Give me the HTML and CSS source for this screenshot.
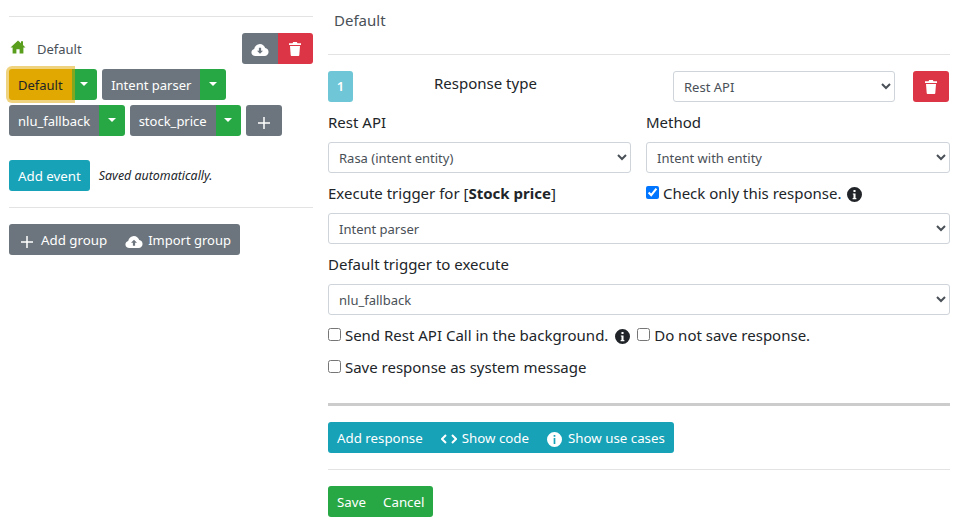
FILE: index.html
```html
<!DOCTYPE html>
<html lang="en">
<head>
    <meta charset="UTF-8">
    <title>Default</title>
    <link rel="stylesheet" href="styles.css">
</head>
<body>

<div class="page">
    <div class="sidebar">
        <hr class="rule first-rule">
        <div class="group-head">
            <span class="group-title">
                <svg class="home-icon" viewBox="0 0 16 14"><path d="M8 0.5 0.5 7.500H2.600V13.500H6.400V9.200H9.600V13.500H13.400V7.500H15.500L13 5.100V1.300H11V3.300Z"/></svg>
                Default
            </span>
            <div class="btn-group">
                <button class="btn btn-grey icon-btn">
                    <svg class="icon-cloud" viewBox="0 0 20 14"><path fill-rule="evenodd" d="M4.600 14C2 14 0 12.200 0 9.800 0 7.800 1.300 6.300 3.200 5.800 3.900 2.500 6.500 0 9.800 0c3 0 5.500 2 6.300 4.800 2.300.4 3.900 2.300 3.900 4.600C20 12 18 14 15.400 14ZM8.700 4.500V8H6.500L10 11.500 13.500 8H11.300V4.500Z"/></svg>
                </button>
                <button class="btn btn-red icon-btn">
                    <svg class="icon-trash" viewBox="0 0 12 14"><path d="M4.200 0H7.800L8.500 1.200H12V3H0V1.200H3.500ZM1 4H11L10.300 13C10.250 13.600 9.800 14 9.200 14H2.800C2.200 14 1.750 13.600 1.700 13Z"/></svg>
                </button>
            </div>
        </div>

        <div class="event-list">
            <div class="btn-group">
                <button class="btn btn-yellow">Default</button>
                <button class="btn btn-green caret-btn"><span class="caret"></span></button>
            </div>
            <div class="btn-group">
                <button class="btn btn-grey">Intent parser</button>
                <button class="btn btn-green caret-btn"><span class="caret"></span></button>
            </div>
            <div class="btn-group">
                <button class="btn btn-grey">nlu_fallback</button>
                <button class="btn btn-green caret-btn"><span class="caret"></span></button>
            </div>
            <div class="btn-group">
                <button class="btn btn-grey">stock_price</button>
                <button class="btn btn-green caret-btn"><span class="caret"></span></button>
            </div>
            <button class="btn btn-grey plus-btn">
                <svg class="icon-plus" viewBox="0 0 12 12"><path d="M5.250 0h1.500v5.250H12v1.500H6.750V12h-1.500V6.750H0v-1.500h5.250Z"/></svg>
            </button>
        </div>

        <div class="add-event">
            <button class="btn btn-teal">Add event</button>
            <em class="saved-note">Saved automatically.</em>
        </div>
        <hr class="rule side-rule">
        <div class="btn-group">
            <button class="btn btn-grey add-group-btn">
                <svg class="icon-plus" viewBox="0 0 12 12"><path d="M5.250 0h1.500v5.250H12v1.500H6.750V12h-1.500V6.750H0v-1.500h5.250Z"/></svg>
                Add group
            </button>
            <button class="btn btn-grey import-btn">
                <svg class="icon-cloud" viewBox="0 0 20 14"><path fill-rule="evenodd" d="M4.600 14C2 14 0 12.200 0 9.800 0 7.800 1.300 6.300 3.200 5.800 3.900 2.500 6.500 0 9.800 0c3 0 5.500 2 6.300 4.800 2.300.4 3.900 2.300 3.900 4.600C20 12 18 14 15.400 14ZM8.700 11.500V8H6.500L10 4.500 13.500 8H11.300V11.500Z"/></svg>
                Import group
            </button>
        </div>
    </div>

    <div class="main">
        <div class="main-title">Default</div>
        <hr class="rule title-rule">

        <div class="type-row">
            <span class="badge">1</span>
            <span class="type-label">Response type</span>
            <select class="field type-select"><option>Rest API</option></select>
            <button class="btn btn-red del-btn">
                <svg class="icon-trash" viewBox="0 0 12 14"><path d="M4.200 0H7.800L8.500 1.200H12V3H0V1.200H3.500ZM1 4H11L10.300 13C10.250 13.600 9.800 14 9.200 14H2.800C2.200 14 1.750 13.600 1.700 13Z"/></svg>
            </button>
        </div>

        <div class="two-cols">
            <div>
                <label class="field-label">Rest API</label>
                <select class="field"><option>Rasa (intent entity)</option></select>
            </div>
            <div>
                <label class="field-label">Method</label>
                <select class="field"><option>Intent with entity</option></select>
            </div>
        </div>

        <div class="two-cols trigger-row">
            <div class="trigger-label">Execute trigger for [<b>Stock price</b>]</div>
            <label class="check"><input type="checkbox" checked> Check only this response.
                <svg class="icon-info" viewBox="0 0 16 16"><path fill-rule="evenodd" d="M8 0a8 8 0 1 0 0 16A8 8 0 0 0 8 0ZM6.900 3.200h2.200v2.200H6.900ZM6.200 6.800h2.900v5h.9v1.200H6v-1.200h.9V8H6.200Z"/></svg>
            </label>
        </div>
        <select class="field"><option>Intent parser</option></select>

        <label class="field-label default-label">Default trigger to execute</label>
        <select class="field"><option>nlu_fallback</option></select>

        <div class="check-row first-check">
            <label class="check"><input type="checkbox"> Send Rest API Call in the background.
                <svg class="icon-info" viewBox="0 0 16 16"><path fill-rule="evenodd" d="M8 0a8 8 0 1 0 0 16A8 8 0 0 0 8 0ZM6.900 3.200h2.200v2.200H6.900ZM6.200 6.800h2.900v5h.9v1.200H6v-1.200h.9V8H6.200Z"/></svg>
            </label>
            <label class="check"><input type="checkbox"> Do not save response.</label>
        </div>
        <div class="check-row second-check">
            <label class="check"><input type="checkbox"> Save response as system message</label>
        </div>

        <hr class="thick-rule">

        <div class="btn-group">
            <button class="btn btn-teal">Add response</button>
            <button class="btn btn-teal">
                <svg class="icon-code" viewBox="0 0 16 10"><path d="M5 1 1 5 5 9M11 1 15 5 11 9"/></svg>
                Show code
            </button>
            <button class="btn btn-teal">
                <svg class="icon-info" viewBox="0 0 16 16"><path fill-rule="evenodd" d="M8 0a8 8 0 1 0 0 16A8 8 0 0 0 8 0ZM7.100 3.200h1.800v1.900H7.100ZM7.100 6.500h1.800v6.300H7.100Z"/></svg>
                Show use cases
            </button>
        </div>
        <hr class="rule bottom-rule">
        <div class="btn-group">
            <button class="btn btn-green save-btn">Save</button>
            <button class="btn btn-green">Cancel</button>
        </div>
    </div>
</div>

</body>
</html>
```

FILE: styles.css
```css
* {
    box-sizing: border-box;
}

body {
    margin: 0;
    font-family: "Noto Sans", "Open Sans", sans-serif;
    font-size: 14px;
    line-height: 21px;
    color: #212529;
    background: #fff;
}

.page {
    display: flex;
    align-items: flex-start;
    padding-left: 9px;
}

.sidebar {
    width: 304px;
    flex: none;
}

.main {
    width: 622px;
    flex: none;
    margin-left: 15px;
}

.rule {
    border: none;
    border-top: 1px solid #e3e3e3;
    margin: 0;
}

.first-rule {
    margin-top: 16px;
}

.side-rule {
    margin: 16px 0;
}

.title-rule {
    margin: 23px 0 16px;
}

.bottom-rule {
    margin: 16px 0;
}

.thick-rule {
    border: none;
    border-top: 3px solid #ccc;
    margin: 25px 0 16px;
}

/* buttons */
.btn {
    display: inline-flex;
    align-items: center;
    height: 31px;
    padding: 1px 8px 0;
    border: 1px solid transparent;
    border-radius: 3px;
    font: inherit;
    font-size: 13.3px;
    color: #fff;
    white-space: nowrap;
}

.btn-group {
    display: inline-flex;
}

.btn-group .btn {
    border-radius: 0;
}

.btn-group .btn:first-child {
    border-radius: 3px 0 0 3px;
}

.btn-group .btn:last-child {
    border-radius: 0 3px 3px 0;
}

.btn-grey { background: #6c757d; }
.btn-green { background: #28a745; }
.btn-red { background: #dc3545; }
.btn-teal { background: #17a2b8; }

.btn-yellow {
    background: #e0a800;
    color: #212529;
    box-shadow: 0 0 0 3px rgba(224, 168, 0, 0.5);
    position: relative;
}

.caret-btn {
    width: 25.5px;
    justify-content: center;
    padding: 0 0 2px;
}

.caret {
    border-top: 4px solid #fff;
    border-left: 4px solid transparent;
    border-right: 4px solid transparent;
}

/* icons */
.home-icon {
    width: 16px;
    height: 14px;
    fill: #5a9e1e;
    margin-bottom: 4px;
}

.icon-cloud {
    width: 18px;
    height: 12px;
    fill: #fff;
    flex: none;
    margin-top: 3px;
}

.icon-trash {
    width: 12px;
    height: 14px;
    fill: #fff;
    flex: none;
}

.icon-plus {
    width: 12px;
    height: 12px;
    fill: #fff;
    flex: none;
    margin-top: 3px;
}

.icon-info {
    width: 15px;
    height: 15px;
    fill: #212529;
    vertical-align: -3px;
    margin-left: 2px;
}

.btn .icon-info {
    fill: #fff;
    margin: 2px 6px 0 0;
}

.icon-code {
    width: 16px;
    height: 10px;
    fill: none;
    stroke: #fff;
    stroke-width: 2;
    margin: 2px 5px 0 0;
}

/* sidebar */
.group-head {
    display: flex;
    justify-content: space-between;
    align-items: center;
    margin-top: 16px;
}

.group-title {
    display: flex;
    align-items: center;
    padding-top: 1px;
    margin-left: 1px;
    font-size: 13px;
    color: #495057;
}

.group-title .home-icon {
    margin-right: 11px;
}

.icon-btn {
    width: 35.5px;
    justify-content: center;
    padding: 0;
}

.event-list {
    display: flex;
    flex-wrap: wrap;
    gap: 5px;
    margin-top: 5px;
}

.event-list .btn {
    font-size: 13px;
}

.plus-btn {
    width: 36px;
    justify-content: center;
}

.add-event {
    display: flex;
    align-items: center;
    gap: 9px;
    margin-top: 24px;
}

.saved-note {
    font-size: 12.4px;
}

.add-group-btn {
    padding-left: 11px;
    gap: 8px;
}

.import-btn {
    font-size: 13px;
    gap: 5px;
}

.save-btn {
    padding-right: 7px;
}

/* main */
.main-title {
    margin: 10px 0 0 6px;
    font-size: 15px;
    color: #495057;
}

.type-row {
    display: flex;
    align-items: flex-start;
}

.badge {
    width: 25px;
    height: 31px;
    border-radius: 3px;
    background: #6ec6d6;
    color: #fff;
    font-weight: 600;
    font-size: 13px;
    display: flex;
    align-items: center;
    justify-content: center;
}

.type-label {
    font-size: 15px;
    margin-left: 81px;
    margin-top: 2px;
    width: 239px;
}

.del-btn {
    width: 36px;
    justify-content: center;
    margin-left: 18px;
}

.field {
    display: block;
    width: 100%;
    height: 31px;
    padding: 0 6px;
    border: 1px solid #ced4da;
    border-radius: 3px;
    background-color: #fff;
    font: inherit;
    font-size: 13px;
    color: #495057;
}

.type-row .field {
    width: 222px;
}

.two-cols {
    display: grid;
    grid-template-columns: 303px 304px;
    column-gap: 15px;
}

.field-label {
    display: block;
    font-size: 15px;
    margin: 10px 0 9px;
}

.trigger-row {
    margin: 10px 0 9px;
    font-size: 15px;
}

.trigger-label b {
    font-weight: 700;
}

.default-label {
    margin: 10px 0 9px;
}

.check {
    font-size: 15px;
}

.check input {
    width: 13px;
    height: 13px;
    margin: 0;
}

.check-row {
    display: flex;
    gap: 7px;
}

.first-check {
    margin-top: 10px;
}

.first-check .icon-info {
    margin-left: 3px;
}

.second-check {
    margin-top: 11px;
}
```
